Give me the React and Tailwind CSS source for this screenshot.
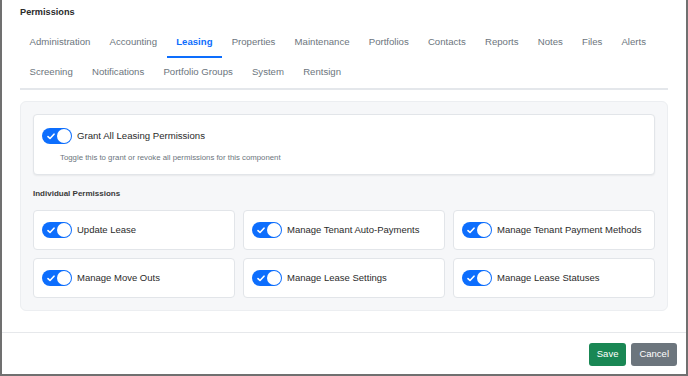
import React from "react";

const tabs1 = ["Administration","Accounting","Leasing","Properties","Maintenance","Portfolios","Contacts","Reports","Notes","Files","Alerts","Screening","Notifications","Portfolio Groups","System","Rentsign"];

function Toggle() {
  return (
    <div className="relative w-[30px] h-[16px] rounded-full bg-[#0d6efd] shrink-0">
      <svg className="absolute left-[5px] top-[4.5px]" width="8" height="7" viewBox="0 0 8 7" fill="none">
        <path d="M1 3.6 L3 5.5 L7 1.2" stroke="white" strokeWidth="1.6" strokeLinecap="round" strokeLinejoin="round" />
      </svg>
      <div className="absolute right-[1px] top-[1px] w-[14px] h-[14px] rounded-full bg-white"></div>
    </div>
  );
}

const perms = ["Update Lease","Manage Tenant Auto-Payments","Manage Tenant Payment Methods","Manage Move Outs","Manage Lease Settings","Manage Lease Statuses"];

export default function App() {
  return (
    <div className="w-[688px] h-[376px] bg-white border-l-2 border-r-2 border-b-2 border-[#707070] flex flex-col" style={{ fontFamily: '"Liberation Sans", Arial, sans-serif' }}>
      <div className="px-[18px]">
        <div className="pt-[4px] text-[9.2px] leading-[16px] font-bold text-[#2b2b2b]">Permissions</div>
        <div className="mt-[8px] flex flex-wrap border-b-2 border-[#e4e7eb]">
          {tabs1.map((t) => {
            const active = t === "Leasing";
            return (
              <div key={t} className={"h-[30px] px-[9.6px] flex items-center text-[9.6px] border-b-2 " + (active ? "border-[#0d6efd] text-[#0d6efd] font-bold" : "border-transparent text-[#6c757d]")}>
                {t}
              </div>
            );
          })}
        </div>
        <div className="mt-[11px] bg-[#f6f7f9] border border-[#eceef1] rounded-[6px] p-[12px]">
          <div className="bg-white border border-[#e2e5e9] rounded-[4px] shadow-[0_1px_2px_rgba(0,0,0,0.06)] pl-[8px] pt-[13px] pb-[11px]">
            <div className="flex items-center h-[16px]">
              <Toggle />
              <span className="ml-[5px] text-[9.6px] text-[#2b2b2b]">Grant All Leasing Permissions</span>
            </div>
            <div className="mt-[9px] ml-[18px] text-[7.8px] leading-[10px] text-[#6c757d]">Toggle this to grant or revoke all permissions for this component</div>
          </div>
          <div className="mt-[13px] mb-[10px] text-[8px] leading-[12px] font-bold text-[#3a3a3a]">Individual Permissions</div>
          <div className="grid grid-cols-3 gap-[8px]">
            {perms.map((p) => (
              <div key={p} className="h-[40px] bg-white border border-[#e2e5e9] rounded-[4px] flex items-center px-[8px]">
                <Toggle />
                <span className="ml-[5px] text-[9.5px] text-[#2b2b2b]">{p}</span>
              </div>
            ))}
          </div>
        </div>
      </div>
      <div className="mt-[21px] border-t border-[#e6e8eb] flex justify-end gap-[5px] pt-[10px] pr-[9px]">
        <button className="h-[23px] px-[8px] rounded-[3px] bg-[#198754] text-white text-[9.5px]">Save</button>
        <button className="h-[23px] px-[8px] rounded-[3px] bg-[#6c757d] text-white text-[9.5px]">Cancel</button>
      </div>
    </div>
  );
}
